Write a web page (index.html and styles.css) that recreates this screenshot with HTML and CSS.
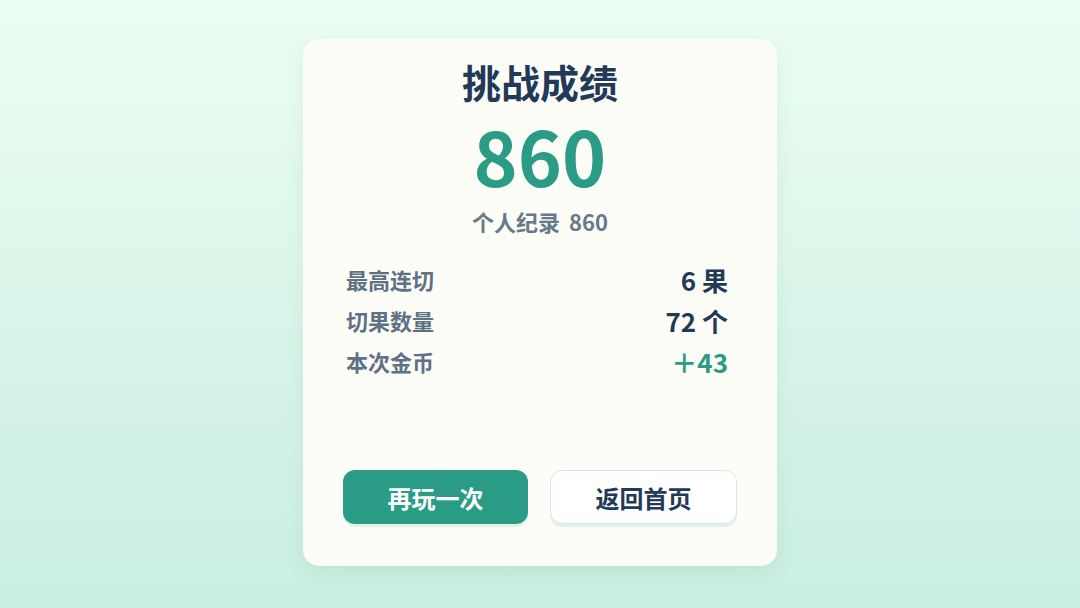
FILE: index.html
```html
<!DOCTYPE html>
<html lang="zh-CN">
<head>
    <meta charset="UTF-8">
    <meta name="viewport" content="width=device-width, initial-scale=1.0">
    <title>挑战成绩</title>
    <link rel="stylesheet" href="styles.css">
</head>
<body>
    <div class="result-card">
        <header>
            <h1 class="title">挑战成绩</h1>
            <div class="score">860</div>
            <div class="best">个人纪录 860</div>
        </header>
        <main class="stats">
            <div class="stat-row">
                <span class="stat-label">最高连切</span>
                <span class="stat-value">6 果</span>
            </div>
            <div class="stat-row">
                <span class="stat-label">切果数量</span>
                <span class="stat-value">72 个</span>
            </div>
            <div class="stat-row">
                <span class="stat-label">本次金币</span>
                <span class="stat-value coins">＋43</span>
            </div>
        </main>
        <footer class="actions">
            <button class="btn btn-primary">再玩一次</button>
            <button class="btn btn-secondary">返回首页</button>
        </footer>
    </div>
</body>
</html>
```

FILE: styles.css
```css
body {
    margin: 0;
    height: 100vh;
    font-family: "Noto Sans CJK SC", "Noto Sans", sans-serif;
    background: linear-gradient(180deg, #ecfdf3 0%, #c9eee0 100%);
    display: flex;
    justify-content: center;
    align-items: flex-start;
    padding-top: 39px;
    box-sizing: border-box;
}

.result-card {
    width: 474px;
    height: 527px;
    background-color: #fcfdf7;
    border-radius: 16px;
    box-shadow: 0 6px 20px rgba(40, 110, 90, 0.08);
    padding: 0 40px 42px;
    box-sizing: border-box;
    display: flex;
    flex-direction: column;
}

header {
    text-align: center;
}

.title {
    margin: 20px 0 0;
    font-size: 39px;
    line-height: 44px;
    font-weight: 700;
    color: #223a58;
}

.score {
    font-size: 75px;
    line-height: 76px;
    font-weight: 700;
    color: #2a9b85;
    margin-top: 14px;
}

.best {
    font-size: 22px;
    line-height: 28px;
    font-weight: 700;
    color: #667a8b;
    word-spacing: 4px;
    margin-top: 14px;
}

.stats {
    flex: 1;
    margin-top: 30px;
    padding: 0 9px 0 3px;
    display: flex;
    flex-direction: column;
    gap: 13px;
}

.stat-row {
    display: flex;
    justify-content: space-between;
    align-items: center;
    height: 28px;
}

.stat-label {
    font-size: 22px;
    font-weight: 700;
    color: #5f7184;
}

.stat-value {
    font-size: 26px;
    font-weight: 700;
    color: #223a58;
}

.stat-value.coins {
    color: #2a9b85;
}

.actions {
    display: flex;
    gap: 22px;
}

.btn {
    flex: 1;
    height: 54px;
    border-radius: 12px;
    font-family: inherit;
    font-size: 24px;
    font-weight: 700;
    cursor: pointer;
}

.btn-primary {
    background-color: #2a9b85;
    color: #ffffff;
    border: none;
    box-shadow: 0 3px 0 #e3f1ea;
}

.btn-secondary {
    background-color: #ffffff;
    color: #223a58;
    border: 1.5px solid #d5e9e1;
    box-shadow: 0 3px 0 #e3f1ea;
}
```
